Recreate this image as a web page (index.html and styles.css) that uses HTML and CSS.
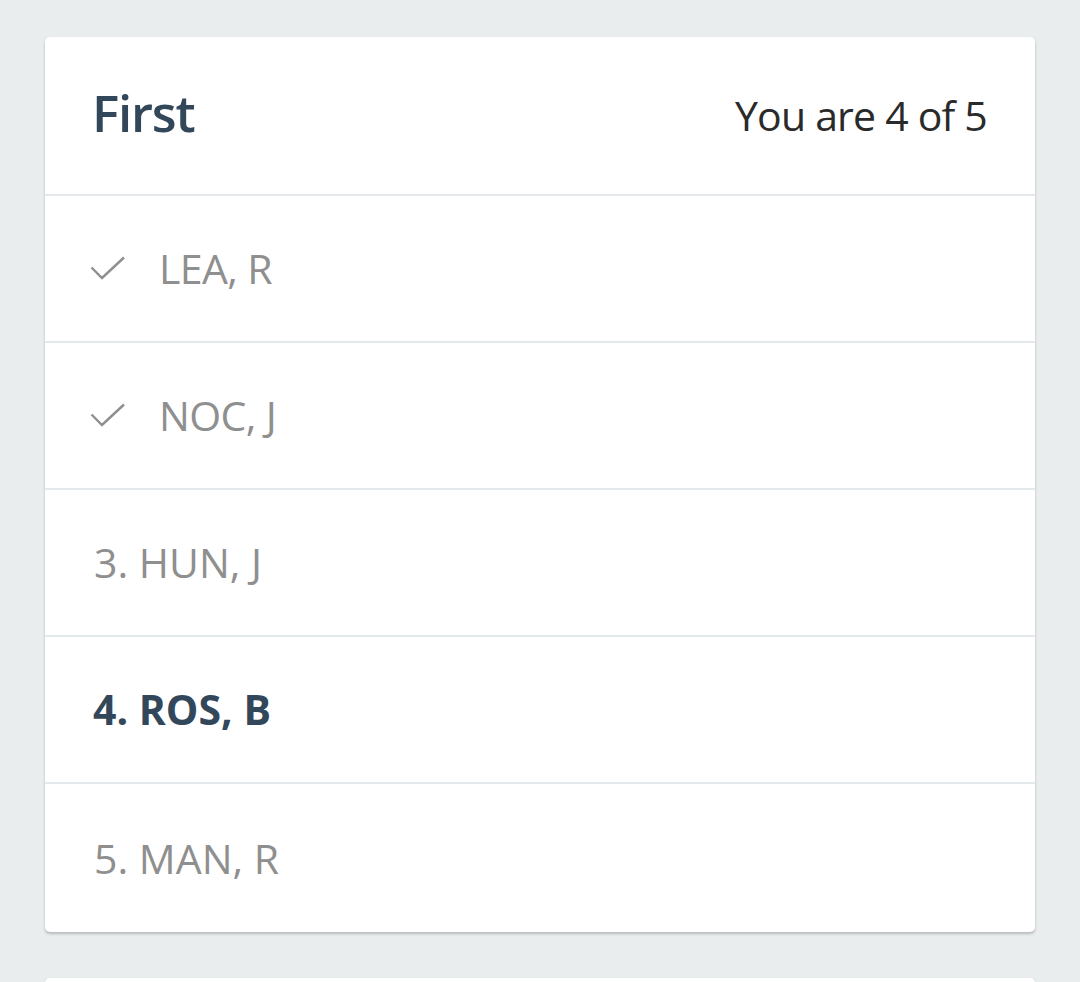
FILE: index.html
```html
<!DOCTYPE html>
<html>
<head>
<meta charset="utf-8">
<link rel="stylesheet" href="styles.css">
</head>
<body>
<div class="page">
  <section class="card">
    <header class="card-head">
      <h1 class="title">First</h1>
      <span class="position">You are 4 of 5</span>
    </header>
    <ul class="queue">
      <li class="row done">
        <svg class="check" width="36" height="24" viewBox="0 0 36 24"><path d="M1.5 11.5 L12 22 L34 1.5" fill="none" stroke="#8f8f8f" stroke-width="2.4"/></svg>
        <span>LEA, R</span>
      </li>
      <li class="row done">
        <svg class="check" width="36" height="24" viewBox="0 0 36 24"><path d="M1.5 11.5 L12 22 L34 1.5" fill="none" stroke="#8f8f8f" stroke-width="2.4"/></svg>
        <span>NOC, J</span>
      </li>
      <li class="row"><span>3. HUN, J</span></li>
      <li class="row current"><span>4. ROS, B</span></li>
      <li class="row"><span>5. MAN, R</span></li>
    </ul>
  </section>
  <section class="card next"></section>
</div>
</body>
</html>
```

FILE: styles.css
```css
* { box-sizing: border-box; }
html, body {
  margin: 0;
  padding: 0;
  background: #e9edee;
  font-family: "Open Sans", "Noto Sans", sans-serif;
}
.page {
  padding: 37px 45px 0;
  height: 982px;
  overflow: hidden;
  display: flex;
  flex-direction: column;
  gap: 46px;
}
.card {
  background: #fff;
  border-radius: 5px;
  box-shadow: 0 2px 3px rgba(0, 0, 0, 0.22);
  flex: none;
}
.card.next {
  height: 60px;
}
.card-head {
  height: 159px;
  display: flex;
  align-items: center;
  justify-content: space-between;
  padding: 0 48px 0 47px;
  border-bottom: 2px solid #e3e8ea;
}
.title {
  margin: 0;
  font-size: 51px;
  font-weight: 600;
  letter-spacing: -1.2px;
  color: #33475a;
  line-height: 1;
  margin-top: -6px;
}
.position {
  font-size: 41px;
  color: #2a2a2a;
  line-height: 1;
  letter-spacing: -0.8px;
}
.queue {
  list-style: none;
  margin: 0;
  padding: 0;
}
.row {
  height: 147px;
  display: flex;
  align-items: center;
  padding: 0 48px 0 49px;
  font-size: 41px;
  color: #8f8f8f;
  border-bottom: 2px solid #e3e8ea;
  line-height: 1;
}
.row:last-child {
  border-bottom: none;
  height: 148px;
}
.row.done { padding-left: 45px; }
.check {
  flex: none;
  margin-right: 33px;
  margin-top: -2px;
}
.row.done span { letter-spacing: -0.6px; }
.row.current {
  color: #33475a;
  font-weight: 700;
  padding-left: 48px;
}
```
